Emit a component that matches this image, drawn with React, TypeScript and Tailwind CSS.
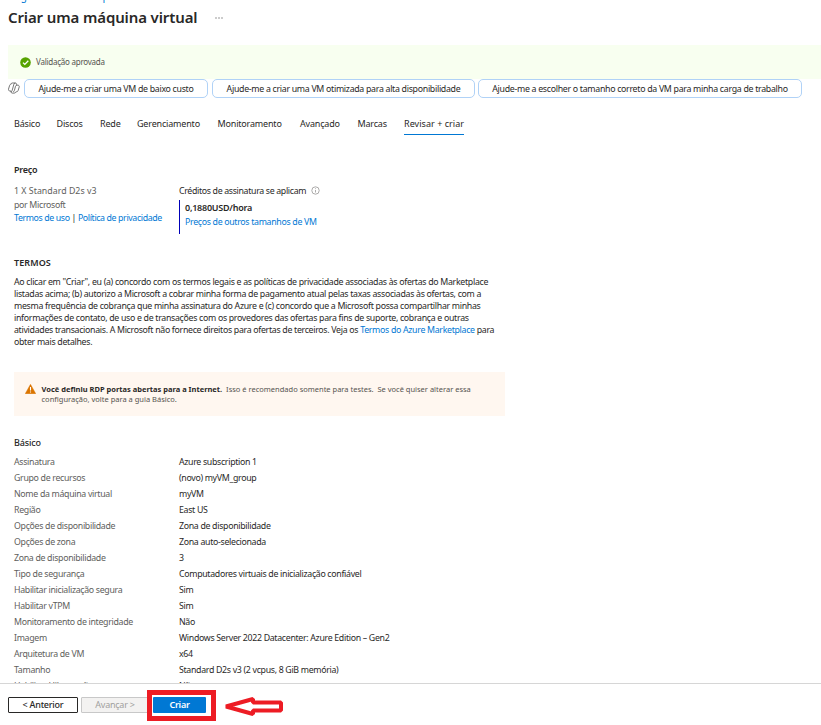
import type { ReactNode } from "react";

const tabs = [
  { label: "Básico", width: "w-[42.5px]" },
  { label: "Discos", width: "w-[43.5px]" },
  { label: "Rede", width: "w-[37px]" },
  { label: "Gerenciamento", width: "w-[80.5px]" },
  { label: "Monitoramento", width: "w-[82.5px]" },
  { label: "Avançado", width: "w-[57.5px]" },
  { label: "Marcas", width: "w-[46.5px]" },
];

const rows = [
  ["Assinatura", "Azure subscription 1"],
  ["Grupo de recursos", "(novo) myVM_group"],
  ["Nome da máquina virtual", "myVM"],
  ["Região", "East US"],
  ["Opções de disponibilidade", "Zona de disponibilidade"],
  ["Opções de zona", "Zona auto-selecionada"],
  ["Zona de disponibilidade", "3"],
  ["Tipo de segurança", "Computadores virtuais de inicialização confiável"],
  ["Habilitar inicialização segura", "Sim"],
  ["Habilitar vTPM", "Sim"],
  ["Monitoramento de integridade", "Não"],
  ["Imagem", "Windows Server 2022 Datacenter: Azure Edition – Gen2"],
  ["Arquitetura de VM", "x64"],
  ["Tamanho", "Standard D2s v3 (2 vcpus, 8 GiB memória)"],
  ["Habilitar Hibernação", "Não"],
];

function Suggestion({ width, children }: { width: string; children: ReactNode }) {
  return (
    <button className={`${width} h-[19px] shrink-0 rounded-[5px] border border-[#b0d2f7] bg-white pt-[1px] text-center leading-[17px] tracking-[-0.3px]`}>
      {children}
    </button>
  );
}

function Link({ children }: { children: ReactNode }) {
  return <a className="text-[#0078d4]">{children}</a>;
}

function CopilotIcon() {
  return (
    <svg width="12" height="12" viewBox="0 0 12 12" fill="none" stroke="#555" strokeWidth="0.8" strokeLinejoin="round">
      <path d="M4.2 1h3.1c.8 0 1.100.5 1.300 1.200l.3 1h.9c1.100 0 1.700.8 1.400 1.800l-1 3.300c-.3 1-.9 1.500-1.800 1.500H7.900c-.4.9-.8 1.300-1.500 1.300H4.200c-.8 0-1-.5-1.200-1.200l-.3-1h-.9C.8 8.900.2 8.100.5 7.100l1-3.300C1.800 2.700 2.200 2.200 3.200 2.200" />
      <path d="M7.300 1c-.8 0-1.200.5-1.400 1.200L4.100 8.600c-.2.7-.6 1.100-1.400 1.100M8.900 3.200c-.8 0-1.200.4-1.400 1.100L6.400 8.500c-.2.8-.6 1.300-1.200 1.300M4.200 1c-.7 0-1 .5-1.200 1.200" />
    </svg>
  );
}

export default function App() {
  return (
    <div className="relative flex h-[725px] w-[821px] flex-col overflow-hidden bg-white font-['Noto_Sans','Open_Sans',sans-serif] text-[8.8px] leading-[12px] tracking-[-0.32px] text-[#292827]">
      <div className="h-[3px] shrink-0 overflow-hidden pl-[9px] text-[10px] tracking-[0px] text-[#0078d4]">
        <div className="-mt-[10px] flex gap-[4px] whitespace-pre">
          <span>Página inicial</span><span>&gt;</span><span>Máquinas virtuais</span>
        </div>
      </div>
      <header className="flex h-[42px] shrink-0 items-start pl-2">
        <h1 className="mt-[4px] w-[207px] whitespace-nowrap text-[15px] leading-[20px] font-semibold tracking-[-0.12px]">Criar uma máquina virtual</h1>
        <div className="mt-[14px] flex gap-[1px]">
          <i className="h-[2px] w-[2px] bg-[#ccc]" />
          <i className="h-[2px] w-[2px] bg-[#ccc]" />
          <i className="h-[2px] w-[2px] bg-[#ccc]" />
        </div>
      </header>
      <div className="ml-2 flex h-[34px] shrink-0 items-center gap-[5px] bg-[#f8fff0] pl-3 text-[8px] tracking-[-0.24px] text-[#55534f]">
        <svg width="11" height="11" viewBox="0 0 11 11">
          <circle cx="5.5" cy="5.5" r="5.3" fill="#57a300" />
          <path d="m3 5.600 1.800 1.800L8.300 3.800" fill="none" stroke="#fff" strokeWidth="1.300" />
        </svg>
        Validação aprovada
      </div>
      <div className="flex h-[19px] shrink-0 items-center pl-2">
        <div className="w-4 shrink-0 pb-[1px]"><CopilotIcon /></div>
        <div className="flex gap-[4px]">
          <Suggestion width="w-[184px]">Ajude-me a criar uma VM de baixo custo</Suggestion>
          <Suggestion width="w-[263px]">Ajude-me a criar uma VM otimizada para alta disponibilidade</Suggestion>
          <Suggestion width="w-[324px] -ml-[1px]">Ajude-me a escolher o tamanho correto da VM para minha carga de trabalho</Suggestion>
        </div>
      </div>
      <nav className="mt-[20px] flex h-[17px] shrink-0 pl-[14px] text-[9px] tracking-[-0.18px]">
        {tabs.map((tab) => (
          <span key={tab.label} className={`${tab.width} shrink-0 whitespace-nowrap`}>{tab.label}</span>
        ))}
        <span className="w-[60px] whitespace-nowrap border-b border-[#0078d4] tracking-[0.04px]">Revisar + criar</span>
      </nav>
      <main className="flex min-h-0 flex-1 flex-col overflow-hidden pl-[14px]">
        <h2 className="mt-[29px] shrink-0 text-[9px] font-semibold tracking-[-0.24px]">Preço</h2>
        <section className="mt-[7px] flex h-[52px] shrink-0">
          <div className="w-[165px] pt-[2px] leading-[13.500px] text-[#605e5c]">
            <p className="tracking-[0.02px]">1 X Standard D2s v3</p>
            <p>por Microsoft</p>
            <p className="whitespace-nowrap tracking-[-0.38px]"><Link>Termos de uso</Link> <span className="text-[#292827]">|</span> <Link>Política de privacidade</Link></p>
          </div>
          <div>
            <div className="mb-[2px] flex h-[15px] items-center gap-[5px] tracking-[-0.34px]">
              Créditos de assinatura se aplicam
              <svg width="9" height="9" viewBox="0 0 9 9" fill="none" stroke="#8a8886" strokeWidth="0.700">
                <circle cx="4.500" cy="4.500" r="3.700" />
                <path d="M4.500 4v2.500M4.500 2.300v.8" />
              </svg>
            </div>
            <div className="h-[34px] border-l border-[#0000b8] pt-[1px] pl-[5px] leading-[14px]">
              <p className="text-[9px] font-semibold tracking-[-0.24px]">0,1880USD/hora</p>
              <p><Link>Preços de outros tamanhos de VM</Link></p>
            </div>
          </div>
        </section>
        <h2 className="mt-[22px] shrink-0 text-[9px] font-semibold tracking-[0.1px]">TERMOS</h2>
        <p className="mt-[7px] shrink-0 whitespace-nowrap tracking-[-0.312px]">
          Ao clicar em "Criar", eu (a) concordo com os termos legais e as políticas de privacidade associadas às ofertas do Marketplace<br />
          listadas acima; (b) autorizo a Microsoft a cobrar minha forma de pagamento atual pelas taxas associadas às ofertas, com a<br />
          mesma frequência de cobrança que minha assinatura do Azure e (c) concordo que a Microsoft possa compartilhar minhas<br />
          informações de contato, de uso e de transações com os provedores das ofertas para fins de suporte, cobrança e outras<br />
          atividades transacionais. A Microsoft não fornece direitos para ofertas de terceiros. Veja os <Link>Termos do Azure Marketplace</Link> para<br />
          obter mais detalhes.
        </p>
        <aside className="mt-[24px] flex h-[44px] w-[491px] shrink-0 gap-[5.500px] bg-[#fff7f0] pt-[12px] pl-[11px] text-[7.500px] leading-[10px] tracking-[0px] text-[#55534f]">
          <svg width="11" height="10" viewBox="0 0 11 10" className="shrink-0">
            <path d="M5.500.3 10.800 9.700H.2Z" fill="#db7500" stroke="#db7500" strokeWidth="0.400" strokeLinejoin="round" />
            <path d="M5.500 3v3.600M5.500 7.400v1.200" stroke="#fff" strokeWidth="1.100" />
          </svg>
          <p className="whitespace-pre"><b className="font-bold text-[#292827]">Você definiu RDP portas abertas para a Internet.</b>  Isso é recomendado somente para testes.  Se você quiser alterar essa<br />configuração, volte para a guia Básico.</p>
        </aside>
        <h2 className="mt-[21px] mb-[5px] shrink-0 text-[9px] font-medium tracking-[-0.16px]">Básico</h2>
        <dl className="shrink-0 leading-[16px]">
          {rows.map(([label, value]) => (
            <div key={label} className="flex h-4">
              <dt className="w-[165px] text-[#605e5c]">{label}</dt>
              <dd>{value}</dd>
            </div>
          ))}
        </dl>
      </main>
      <footer className="flex h-[42px] shrink-0 items-start border-t border-[#d6d6d6] pl-2 text-[9px] tracking-[-0.24px]">
        <button className="mt-[13px] h-4 w-[70px] rounded-[1px] border border-[#292827] leading-[14px] font-medium">&lt; Anterior</button>
        <button className="mt-[13px] ml-[3px] h-4 w-[68px] rounded-[1px] border border-[#c8c8c8] bg-[#f3f2f1] leading-[14px] text-[#a19f9d]">Avançar &gt;</button>
        <div className="mt-[6px] -ml-[2px] h-[31px] w-[69px] border-[5px] border-[#ed1c24] bg-white pt-[2px] pl-[1px]">
          <button className="block h-4 w-[53px] rounded-[1px] bg-[#0078d4] leading-4 font-semibold text-white">Criar</button>
        </div>
        <svg className="mt-[12px] ml-[8px]" width="60" height="22" viewBox="0 0 60 22" fill="none" stroke="#ed1c24" strokeWidth="4" strokeLinejoin="bevel">
          <path d="M2 10.500 29 3V6.500H57V14.500H29V18Z" />
        </svg>
      </footer>
    </div>
  );
}
